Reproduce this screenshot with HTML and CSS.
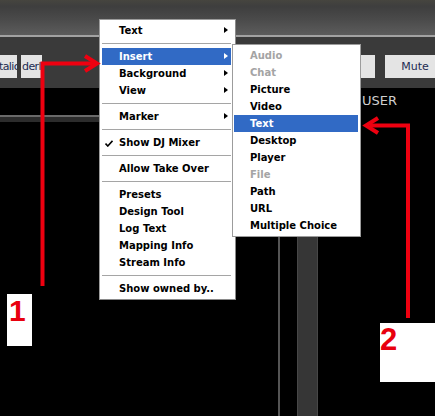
FILE: index.html
```html
<!DOCTYPE html>
<html>
<head>
<meta charset="utf-8">
<link rel="stylesheet" href="styles.css">
</head>
<body>
<div class="screen">
  <div class="titlebar"></div>
  <div class="rule"></div>
  <div class="toolbar">
    <div class="tb-left">
      <span class="btn btn-italic"><span class="btn-text">talic</span></span>
      <span class="btn btn-under"><span class="btn-text">derl</span></span>
    </div>
    <div class="tb-right">
      <span class="btn btn-hidden"></span>
      <span class="btn btn-mute">Mute</span>
    </div>
  </div>
  <div class="stage">
    <div class="panel-left"><div class="hline"></div><div class="band"></div></div>
    <div class="vline"></div>
    <div class="vbar"></div>
    <div class="panel-right"><span class="user">USER</span></div>
  </div>

  <div class="menu menu-main">
    <div class="item sub">Text</div>
    <div class="sep"></div>
    <div class="item sub active">Insert</div>
    <div class="item sub">Background</div>
    <div class="item sub">View</div>
    <div class="sep"></div>
    <div class="item sub">Marker</div>
    <div class="sep"></div>
    <div class="item"><svg class="check" width="8" height="7" viewBox="0 0 8 7"><path d="M0.5 3.5 L2.8 6 L7.5 0.8" fill="none" stroke="#000" stroke-width="1.6"/></svg>Show DJ Mixer</div>
    <div class="sep"></div>
    <div class="item">Allow Take Over</div>
    <div class="sep"></div>
    <div class="item">Presets</div>
    <div class="item">Design Tool</div>
    <div class="item">Log Text</div>
    <div class="item">Mapping Info</div>
    <div class="item">Stream Info</div>
    <div class="sep"></div>
    <div class="item">Show owned by..</div>
  </div>

  <div class="menu menu-sub">
    <div class="item disabled">Audio</div>
    <div class="item disabled">Chat</div>
    <div class="item">Picture</div>
    <div class="item">Video</div>
    <div class="item active">Text</div>
    <div class="item">Desktop</div>
    <div class="item">Player</div>
    <div class="item disabled">File</div>
    <div class="item">Path</div>
    <div class="item">URL</div>
    <div class="item">Multiple Choice</div>
  </div>

  <svg class="arrows" width="435" height="416" viewBox="0 0 435 416">
    <g fill="none" stroke="#ee0010" stroke-width="4" stroke-linejoin="miter">
      <polyline points="42.5,286 42.5,63.5 94,63.5"/>
      <polyline points="85,56 97,63.5 85,71"/>
      <polyline points="408,318 408,125.5 370,125.5"/>
      <polyline points="378,118 366,125.5 378,133"/>
    </g>
  </svg>

  <div class="label label-1">1</div>
  <div class="label label-2">2</div>
</div>
</body>
</html>
```
FILE: styles.css
```css
html, body {
  margin: 0;
  padding: 0;
  background: #000;
}

.screen {
  position: relative;
  width: 435px;
  height: 416px;
  overflow: hidden;
  background: #000;
  display: flex;
  flex-direction: column;
  font-family: "DejaVu Sans", sans-serif;
}

.titlebar {
  height: 35px;
  background: linear-gradient(#46453f 0%, #3e3e3e 18%, #4a4a4a 55%, #5c5c5c 100%);
}

.rule {
  height: 2px;
  background: #a2a2a2;
}

.toolbar {
  height: 51px;
  box-sizing: border-box;
  padding-top: 18px;
  background: #3a3a3a;
  display: flex;
  justify-content: space-between;
  align-items: flex-start;
}

.tb-left, .tb-right {
  display: flex;
  gap: 4px;
}

.tb-right {
  gap: 10px;
  margin-right: -10px;
}

.btn {
  display: block;
  height: 23px;
  line-height: 23px;
  background: #e4e4e4;
  color: #1c2c52;
  font-size: 11px;
  white-space: nowrap;
  overflow: hidden;
}

.btn-italic {
  width: 17px;
}

.btn-italic .btn-text {
  display: block;
  margin-left: -1px;
  letter-spacing: -0.6px;
}

.btn-under {
  width: 21px;
}

.btn-under .btn-text {
  display: block;
  margin-left: 1px;
  letter-spacing: -0.6px;
}

.btn-hidden {
  width: 34px;
}

.btn-mute {
  width: 60px;
  text-align: center;
}

.stage {
  flex: 1;
  display: flex;
}

.panel-left {
  width: 276px;
  padding-top: 27px;
}

.hline {
  height: 2px;
  background: #6a6a6a;
}

.band {
  height: 5px;
  background: #2c2c2c;
}

.vline {
  width: 2px;
  margin-left: 2px;
  background: #555;
}

.vbar {
  width: 19px;
  margin-left: 17px;
  background: #363636;
  border-left: 1px solid #474747;
  border-right: 1px solid #474747;
}

.panel-right {
  flex: 1;
  padding-left: 44px;
  padding-top: 2px;
}

.user {
  color: #cfcfcf;
  font-size: 13px;
  line-height: 15px;
}

.menu {
  position: absolute;
  box-sizing: border-box;
  background: #fff;
  border: 1px solid #9c9c9c;
  font-family: "DejaVu Sans", sans-serif;
  font-weight: bold;
  font-size: 10px;
}

.menu-main {
  left: 99px;
  top: 19px;
  width: 137px;
  padding: 2px 4px 2px 2px;
  border-right-color: #8a8a8a;
  border-bottom-color: #8a8a8a;
}

.menu-sub {
  left: 232px;
  top: 44px;
  width: 129px;
  padding: 2px 2px 2px 1px;
}

.item {
  position: relative;
  height: 17px;
  line-height: 17px;
  padding-left: 17px;
  color: #000;
  white-space: nowrap;
}

.menu-sub .item {
  padding-left: 16px;
}

.item.active {
  background: #316ac5;
  color: #fff;
}

.item.disabled {
  color: #a4a4a4;
}

.item.sub::after {
  content: "";
  position: absolute;
  right: 3px;
  top: 5px;
  width: 0;
  height: 0;
  border-left: 4px solid #000;
  border-top: 3.5px solid transparent;
  border-bottom: 3.5px solid transparent;
}

.item.sub.active::after {
  border-left-color: #fff;
}

.check {
  position: absolute;
  left: 3px;
  top: 6px;
}

.sep {
  height: 1px;
  margin: 4px 0;
  background: #a5a5a5;
}

.arrows {
  position: absolute;
  left: 0;
  top: 0;
  pointer-events: none;
}

.label {
  position: absolute;
  background: #fff;
  color: #e8000e;
  font-family: "Liberation Sans", Arial, sans-serif;
  font-weight: bold;
  box-sizing: border-box;
}

.label-1 {
  left: 7px;
  top: 294px;
  width: 25px;
  height: 52px;
  font-size: 30px;
  line-height: 30px;
  padding: 2px 0 0 2px;
}

.label-2 {
  left: 380px;
  top: 323px;
  width: 55px;
  height: 59px;
  font-size: 31px;
  line-height: 31px;
  padding: 1px 0 0 0;
}
```
